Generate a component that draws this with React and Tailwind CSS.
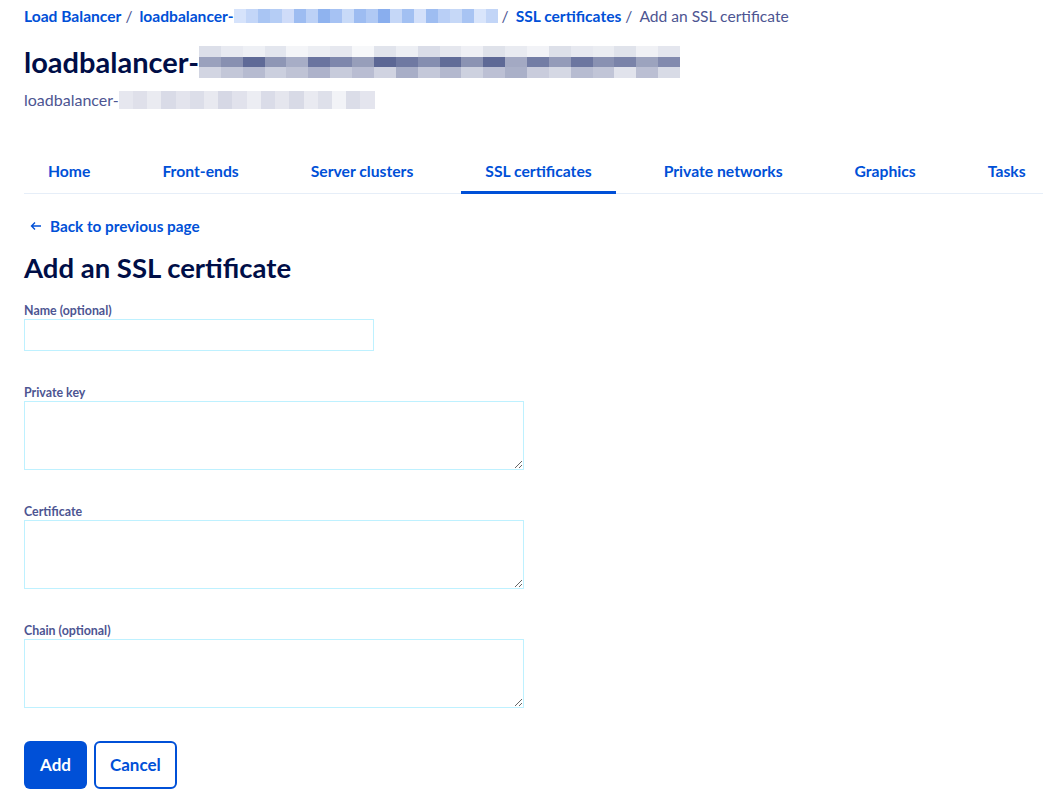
import { useState } from "react";

const tabs = [
  "Home",
  "Front-ends",
  "Server clusters",
  "SSL certificates",
  "Private networks",
  "Graphics",
  "Tasks",
];

// pixelated (blurred) stand-ins for redacted ids
const crumbCells = [
  "bg-[#d6e3fb]", "bg-[#c3d6f8]", "bg-[#a9c5f3]", "bg-[#b5cdf5]", "bg-[#cfdcf9]",
  "bg-[#9dbcf1]", "bg-[#bcd1f6]", "bg-[#8fb3ef]", "bg-[#a6c2f3]", "bg-[#c8daf8]",
  "bg-[#9dbcf1]", "bg-[#b0c9f4]", "bg-[#89aeee]", "bg-[#c5d7f7]", "bg-[#a2c0f2]",
  "bg-[#d3e0fa]", "bg-[#9ebdf1]", "bg-[#b9cff6]", "bg-[#c6d8f7]", "bg-[#a8c4f3]",
  "bg-[#d9e5fb]", "bg-[#c2d5f7]",
];

const titleRows = [
  ["bg-[#dcdfe9]", "bg-[#e8eaf1]", "bg-[#eef0f5]", "bg-[#e3e6ee]", "bg-[#f4f5f8]", "bg-[#eceef3]", "bg-[#e6e8ef]", "bg-[#f7f8fa]", "bg-[#e1e4ec]", "bg-[#edeff4]", "bg-[#dadde8]", "bg-[#e5e7ee]", "bg-[#eff0f5]", "bg-[#dfe2ea]", "bg-[#e9ebf1]", "bg-[#f2f3f7]", "bg-[#dde0e9]", "bg-[#e7e9f0]", "bg-[#ebedf2]", "bg-[#e0e3eb]", "bg-[#f0f1f5]", "bg-[#e4e6ee]"],
  ["bg-[#9aa1bd]", "bg-[#8890b1]", "bg-[#5f6a97]", "bg-[#8e96b5]", "bg-[#a7adc6]", "bg-[#6a749f]", "bg-[#7e87ac]", "bg-[#979eba]", "bg-[#5c6795]", "bg-[#6f79a2]", "bg-[#858eb0]", "bg-[#616c98]", "bg-[#8b93b3]", "bg-[#5e6996]", "bg-[#a3a9c3]", "bg-[#737da5]", "bg-[#949bb9]", "bg-[#6c76a0]", "bg-[#8991b2]", "bg-[#7a83a9]", "bg-[#9ca3be]", "bg-[#828aae]"],
  ["bg-[#d2d5e2]", "bg-[#c3c7d8]", "bg-[#b6bbd0]", "bg-[#cbcfde]", "bg-[#bfc3d5]", "bg-[#adb2ca]", "bg-[#c7cbdb]", "bg-[#b9bdd2]", "bg-[#d0d3e1]", "bg-[#a8aec7]", "bg-[#c4c8d9]", "bg-[#b3b8ce]", "bg-[#cdd1df]", "bg-[#bcc0d4]", "bg-[#aab0c8]", "bg-[#c9ccdc]", "bg-[#d5d8e4]", "bg-[#b7bcd1]", "bg-[#c1c5d7]", "bg-[#e1e3ec]", "bg-[#bbbfd3]", "bg-[#d8dbe6]"],
];

const subCells = [
  "bg-[#e6e7ef]", "bg-[#dfe0ea]", "bg-[#eaebf1]", "bg-[#d9dbe7]", "bg-[#e3e4ed]", "bg-[#dcdee9]",
  "bg-[#e8e9f0]", "bg-[#d6d8e5]", "bg-[#e1e2ec]", "bg-[#ecedf3]", "bg-[#dadce8]", "bg-[#e5e6ee]",
  "bg-[#d8dae6]", "bg-[#e9eaf1]", "bg-[#dee0ea]", "bg-[#f2f3f7]", "bg-[#dbdde8]", "bg-[#e4e5ee]",
];

function Field({ label, area }) {
  return (
    <div className="flex flex-col">
      <label className="text-[12.4px] font-bold text-[#4d5592] leading-[14px] mb-[1px]">
        {label}
      </label>
      {area ? (
        <textarea className="w-[500px] h-[69px] border border-[#bef1ff] bg-white outline-none resize-y" />
      ) : (
        <input className="w-[350px] h-[32px] border border-[#bef1ff] bg-white outline-none" />
      )}
    </div>
  );
}

function Sep() {
  return <span className="ml-[4px] mr-[7px] font-normal text-[#4d5592]">/</span>;
}

export default function App() {
  const [active] = useState("SSL certificates");

  return (
    <div className="min-h-screen bg-white font-['Lato',sans-serif] text-[#4d5592] overflow-hidden">
      <div className="pl-6">
        {/* breadcrumb */}
        <nav className="flex items-center h-[32px] text-[15.6px] leading-[20px]">
          <a className="font-bold text-[#0050d7]">Load Balancer</a>
          <Sep />
          <a className="font-bold text-[#0050d7] flex items-center">
            loadbalancer-
            <span className="flex h-[14px]">
              {crumbCells.map((c, i) => (
                <span key={i} className={`w-[12px] shrink-0 ${c}`} />
              ))}
            </span>
          </a>
          <Sep />
          <a className="font-bold text-[#0050d7]">SSL certificates</a>
          <Sep />
          <span className="text-[#4d5592]">Add an SSL certificate</span>
        </nav>

        {/* title */}
        <div className="flex items-center mt-[13px] h-[34px]">
          <h1 className="text-[29px] font-bold text-[#000e47] leading-[34px]">loadbalancer-</h1>
          <div className="flex flex-col w-[481px] h-[32px]">
            {titleRows.map((row, r) => (
              <div key={r} className="flex flex-1">
                {row.map((c, i) => (
                  <span key={i} className={`flex-1 ${c}`} />
                ))}
              </div>
            ))}
          </div>
        </div>

        <div className="flex items-center mt-[11px] h-[20px] text-[16px]">
          <span>loadbalancer-</span>
          <span className="flex h-[18px] w-[256px]">
            {subCells.map((c, i) => (
              <span key={i} className={`flex-1 ${c}`} />
            ))}
          </span>
        </div>

        {/* tabs */}
        <div className="mt-[42px] flex gap-6 border-b border-[#e6eef8] whitespace-nowrap">
          {tabs.map((t) => (
            <button
              key={t}
              className={`px-6 h-[42px] text-[15.7px] font-bold text-[#0050d7] border-b-[3px] -mb-[1px] ${
                t === active ? "border-[#0050d7]" : "border-transparent"
              }`}
            >
              {t}
            </button>
          ))}
        </div>

        {/* back link */}
        <a className="flex items-center mt-[22px] h-[20px] text-[15.3px] font-bold text-[#0050d7]">
          <svg width="12" height="10" viewBox="0 0 12 10" className="ml-[6px] mr-[8px]" fill="none">
            <path d="M11 5H1.5M5 1.5L1.5 5L5 8.5" stroke="#0050d7" strokeWidth="1.4" />
          </svg>
          Back to previous page
        </a>

        <h2 className="mt-[15px] text-[27.5px] font-bold text-[#000e47] leading-[34px]">
          Add an SSL certificate
        </h2>

        <form className="mt-[19px] flex flex-col gap-[35px]">
          <Field label="Name (optional)" />
          <Field label="Private key" area />
          <Field label="Certificate" area />
          <Field label="Chain (optional)" area />
          <div className="flex gap-[7px] -mt-[2px]">
            <button
              type="button"
              className="h-[48px] px-[16px] rounded-[6px] bg-[#0050d7] text-white text-[17px] font-bold"
            >
              Add
            </button>
            <button
              type="button"
              className="h-[48px] px-[14px] rounded-[6px] border-2 border-[#0050d7] bg-white text-[#0050d7] text-[17px] font-bold"
            >
              Cancel
            </button>
          </div>
        </form>
      </div>
    </div>
  );
}
